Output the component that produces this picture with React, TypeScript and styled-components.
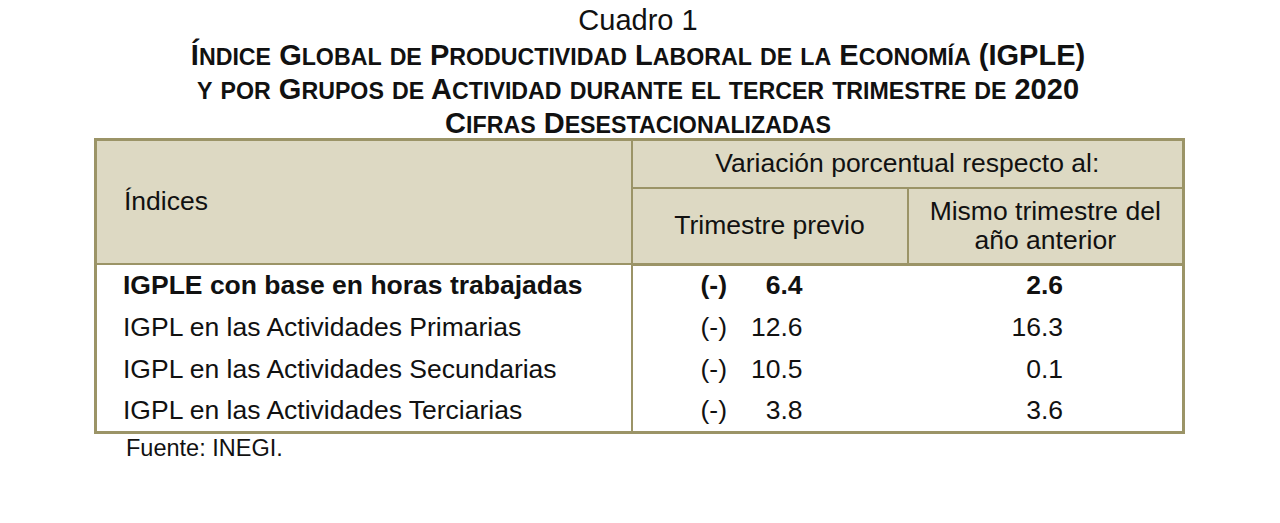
import React from "react";
import styled, { createGlobalStyle } from "styled-components";

const Global = createGlobalStyle`
  html, body { margin: 0; padding: 0; background: #ffffff; }
  body { font-family: "Liberation Sans", Arial, sans-serif; color: #111; }
`;

const Page = styled.div`
  width: 1280px;
  height: 523px;
  display: flex;
  flex-direction: column;
  align-items: center;
  background: #fff;
`;

const TitleBlock = styled.div`
  display: flex;
  flex-direction: column;
  align-items: center;
  padding-right: 4px;
`;

const Caption = styled.div`
  font-size: 29px;
  line-height: 36px;
  height: 36px;
  padding-top: 2px;
`;

const Heading = styled.div`
  font-size: 29px;
  font-weight: bold;
  line-height: 34px;
  height: 34px;
  white-space: nowrap;
`;

const Small = styled.span`
  font-size: 23.2px;
`;

function SmallCaps({ text }: { text: string }) {
  const parts: { small: boolean; s: string }[] = [];
  for (const ch of text) {
    const isLower = ch !== ch.toUpperCase();
    const last = parts[parts.length - 1];
    if (last && last.small === isLower) last.s += ch;
    else parts.push({ small: isLower, s: ch });
  }
  return (
    <>
      {parts.map((p, i) =>
        p.small ? <Small key={i}>{p.s.toUpperCase()}</Small> : <span key={i}>{p.s}</span>
      )}
    </>
  );
}

const TableWrap = styled.div`
  align-self: flex-start;
  width: 1088px;
  margin-left: 94px;
  margin-top: -2.5px;
`;

const Table = styled.table`
  width: 1088px;
  border-collapse: collapse;
  table-layout: fixed;
  border: 3px solid #9b9467;
  font-size: 26.5px;
`;

const HeadCell = styled.th<{ $align?: string; $h?: number }>`
  background: #ddd9c3;
  font-weight: normal;
  text-align: ${(p) => p.$align || "center"};
  vertical-align: middle;
  border: 2px solid #9b9467;
  height: ${(p) => p.$h || 40}px;
  padding: ${(p) => (p.$align === "left" ? "0 0 0 27px" : "0")};
  line-height: 29px;
`;

const HeadBottom = styled.tr`
  & > th { border-bottom: 3px solid #9b9467; }
`;

const Row = styled.tr<{ $bold?: boolean }>`
  height: 42px;
  font-weight: ${(p) => (p.$bold ? "bold" : "normal")};
`;

const LabelCell = styled.td`
  padding: 0 0 0 26px;
  border-right: 2px solid #9b9467;
  white-space: nowrap;
  vertical-align: middle;
`;

const PrevCell = styled.td`
  padding: 0 0 0 68px;
  vertical-align: middle;
`;

const Pair = styled.div`
  display: grid;
  grid-template-columns: 40px 62px;
  width: 102px;
`;

const Sign = styled.span``;

const Num = styled.span`
  text-align: right;
`;

const YearCell = styled.td`
  text-align: right;
  padding-right: 119px;
  vertical-align: middle;
`;

const Source = styled.div`
  font-size: 23.5px;
  line-height: 28px;
  padding-left: 32px;
`;

const rows = [
  { label: "IGPLE con base en horas trabajadas", prev: "6.4", year: "2.6", bold: true },
  { label: "IGPL en las Actividades Primarias", prev: "12.6", year: "16.3" },
  { label: "IGPL en las Actividades Secundarias", prev: "10.5", year: "0.1" },
  { label: "IGPL en las Actividades Terciarias", prev: "3.8", year: "3.6" },
];

export default function App() {
  return (
    <Page>
      <Global />
      <TitleBlock>
        <Caption>Cuadro 1</Caption>
        <Heading><SmallCaps text="Índice Global de Productividad Laboral de la Economía (IGPLE)" /></Heading>
        <Heading><SmallCaps text="y por Grupos de Actividad durante el tercer trimestre de 2020" /></Heading>
        <Heading><SmallCaps text="Cifras Desestacionalizadas" /></Heading>
      </TitleBlock>
      <TableWrap>
        <Table>
          <colgroup>
            <col style={{ width: 536 }} />
            <col style={{ width: 276 }} />
            <col style={{ width: 276 }} />
          </colgroup>
          <thead>
            <tr>
              <HeadCell $align="left" rowSpan={2}>Índices</HeadCell>
              <HeadCell colSpan={2} $h={46}>Variación porcentual respecto al:</HeadCell>
            </tr>
            <HeadBottom>
              <HeadCell $h={74}>Trimestre previo</HeadCell>
              <HeadCell $h={74}>Mismo trimestre del<br />año anterior</HeadCell>
            </HeadBottom>
          </thead>
          <tbody>
            {rows.map((r) => (
              <Row key={r.label} $bold={r.bold}>
                <LabelCell>{r.label}</LabelCell>
                <PrevCell>
                  <Pair>
                    <Sign>(-)</Sign>
                    <Num>{r.prev}</Num>
                  </Pair>
                </PrevCell>
                <YearCell>{r.year}</YearCell>
              </Row>
            ))}
          </tbody>
        </Table>
        <Source>Fuente: INEGI.</Source>
      </TableWrap>
    </Page>
  );
}
